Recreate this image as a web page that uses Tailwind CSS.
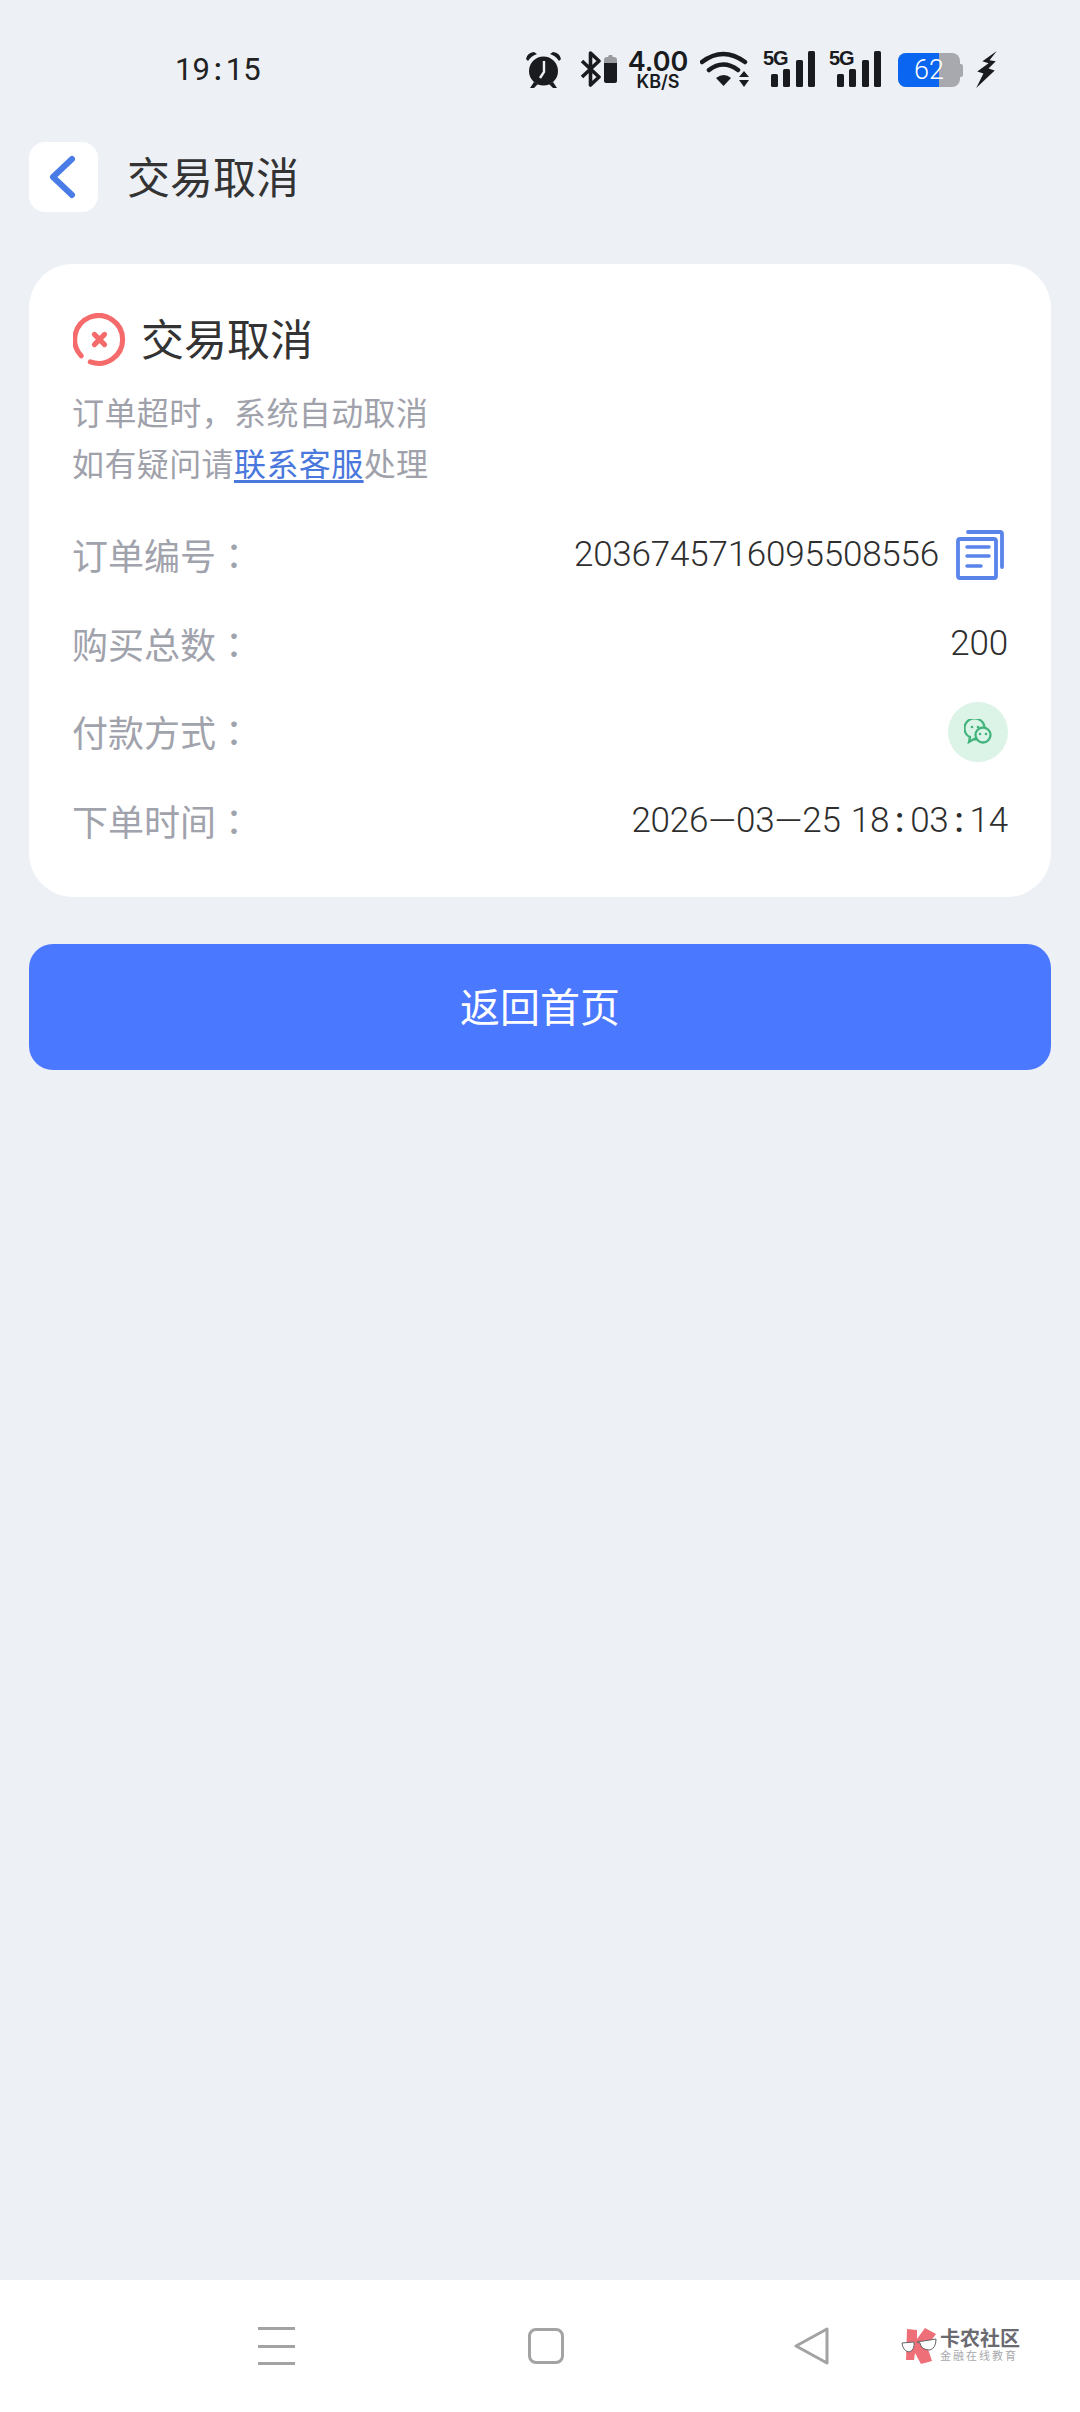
<!DOCTYPE html>
<html lang="zh-CN"><head><meta charset="utf-8">
<script src="https://cdn.jsdelivr.net/npm/@tailwindcss/browser@4"></script>
</head>
<body class="m-0">
<div class="w-[1080px] h-[2412px] bg-[#edf1f6] flex flex-col overflow-hidden font-['Roboto','Noto_Sans_CJK_SC',sans-serif] text-[#333333]">
  <!-- status bar -->
  <div class="h-[142px] shrink-0 flex items-center pl-[175px] pb-[4px]">
    <div class="w-[350px] flex items-center text-[31px] leading-none font-['Roboto'] text-[#222]"><span>19</span><span class="w-[16px] text-center font-medium">:</span><span>15</span></div>
    <svg class="w-[37px] h-[39px]" viewBox="0 0 37 39"><circle cx="18.5" cy="21" r="14.5" fill="#1a1b1f"/><path d="M19 11v11l-4 6" stroke="#edf1f6" stroke-width="2.4" fill="none"/><path d="M1 9q1-6 8-7l3 2q-6 2-9 7zM36 9q-1-6-8-7l-3 2q6 2 9 7z" fill="#1a1b1f"/><path d="M9 32l-4 6h4l4-4zM28 32l4 6h-4l-4-4z" fill="#1a1b1f"/></svg>
    <svg class="w-[21px] h-[36px] ml-[18px]" viewBox="0 0 21 36"><path d="M2 10l17 16-8.500 8V2l8.500 8L2 26" stroke="#1a1b1f" stroke-width="3.600" fill="none" stroke-linejoin="round"/></svg>
    <svg class="w-[13px] h-[36px] ml-[3px]" viewBox="0 0 13 36"><path d="M0 9q0-3 3-3h1l1-2h3l1 2h1q3 0 3 3v5H0z" fill="#9a9b9f"/><path d="M0 12h13v18q0 2-2 2H2q-2 0-2-2z" fill="#1a1b1f"/></svg>
    <div class="w-[60px] ml-[11px] flex flex-col items-center text-[#1a1b1f] font-['Inter'] font-semibold"><span class="text-[27px] leading-[24px]">4.00</span><span class="text-[18px] leading-[15px]">KB/S</span></div>
    <svg class="w-[50px] h-[36px] ml-[12px]" viewBox="0 0 50 36"><path d="M2 11q21-16 43 0M9 19q14-11 29 0" stroke="#1a1b1f" stroke-width="4.500" fill="none" stroke-linecap="round"/><path d="M16 27q8-6 15 0l-7.500 8z" fill="#1a1b1f"/><path d="M44 20l5 6H39zM44 36l5-7H39z" fill="#1a1b1f"/></svg>
    <div class="relative w-[52px] h-[36px] ml-[13px] flex items-end gap-[5.500px] justify-end"><span class="absolute left-[0px] top-[-2px] text-[20px] leading-[19px] tracking-[-1px] font-bold font-['Liberation_Sans'] text-[#1a1b1f]">5G</span><i class="block w-[7px] h-[13px] bg-[#1a1b1f] rounded-[1.500px]"></i><i class="block w-[7px] h-[18px] bg-[#1a1b1f] rounded-[1.500px]"></i><i class="block w-[7px] h-[27px] bg-[#1a1b1f] rounded-[1.500px]"></i><i class="block w-[7px] h-[36px] bg-[#1a1b1f] rounded-[1.500px]"></i></div>
    <div class="relative w-[52px] h-[36px] ml-[14px] flex items-end gap-[5.500px] justify-end"><span class="absolute left-[0px] top-[-2px] text-[20px] leading-[19px] tracking-[-1px] font-bold font-['Liberation_Sans'] text-[#1a1b1f]">5G</span><i class="block w-[7px] h-[13px] bg-[#1a1b1f] rounded-[1.500px]"></i><i class="block w-[7px] h-[18px] bg-[#1a1b1f] rounded-[1.500px]"></i><i class="block w-[7px] h-[27px] bg-[#1a1b1f] rounded-[1.500px]"></i><i class="block w-[7px] h-[36px] bg-[#1a1b1f] rounded-[1.500px]"></i></div>
    <div class="relative w-[62px] h-[34px] ml-[17px] mt-[2px] rounded-[8px] bg-[#a8a9ae] overflow-hidden flex items-center justify-center"><div class="absolute left-0 top-0 bottom-0 w-[41px] bg-[#0a66f0]"></div><span class="relative text-[27px] leading-none text-white font-['Roboto'] font-light">62</span></div>
    <div class="w-[3px] h-[13px] mt-[2px] bg-[#a8a9ae] rounded-r-[2px]"></div>
    <svg class="w-[23px] h-[37px] ml-[12px]" viewBox="0 0 20 36"><path d="M20 0L6 10l6 2L1 20l6 2-7 14 18-17-6-2 7-7-6-1z" fill="#1a1b1f"/></svg>
  </div>
  <!-- header -->
  <div class="flex items-center pl-[29px] h-[70px] shrink-0">
    <div class="w-[69px] h-[70px] bg-white rounded-[16px] flex items-center justify-center"><svg class="w-[36px] h-[48px]" viewBox="0 0 36 48"><path d="M26 6L7 24l19 18" stroke="#4a7ce8" stroke-width="6" fill="none" stroke-linecap="round" stroke-linejoin="round"/></svg></div>
    <span class="ml-[29px] mt-[4px] text-[43px] leading-none">交易取消</span>
  </div>
  <!-- card -->
  <div class="mx-[29px] mt-[52px] h-[633px] bg-white rounded-[44px] px-[43px] pt-[50px] shrink-0">
    <div class="flex items-center h-[52px]">
      <svg class="w-[54px] h-[54px] ml-[1px]" viewBox="0 0 53 53"><path d="M8 42A23.500 23.500 0 1 1 17 48" stroke="#f56b6b" stroke-width="5" fill="none" stroke-linecap="round"/><path d="M21 21l10 10M31 21L21 31" stroke="#f56b6b" stroke-width="5" stroke-linecap="round"/></svg>
      <span class="ml-[14px] mt-[2px] text-[43px] leading-none">交易取消</span>
    </div>
    <div class="mt-[23px] text-[32px] leading-[51px] text-[#9fa1ab] tracking-[0.4px]">
      <p>订单超时，系统自动取消</p>
      <p>如有疑问请<span class="text-[#4a78dc] underline underline-offset-4">联系客服</span>处理</p>
    </div>
    <div class="mt-[20px] flex flex-col text-[#2e2e2e]">
      <div class="h-[88.500px] flex items-center justify-between">
        <span class="text-[36px] text-[#a0a2ac] mt-[2px]">订单编号<span lang="zh-TW" class="font-['Noto_Sans_CJK_TC']">：</span></span>
        <div class="flex items-center"><span class="text-[35px] tracking-[-0.2px] font-light">2036745716095508556</span>
          <svg class="w-[50px] h-[52px] ml-[17px] mr-[2px]" viewBox="0 0 50 52"><rect x="2" y="10" width="38" height="39" rx="2" fill="none" stroke="#5a84ea" stroke-width="3.800"/><path d="M12 3h32q2 0 2 2v33" fill="none" stroke="#5a84ea" stroke-width="3.800" stroke-linecap="round"/><path d="M11 18h22M11 27h22M11 37h14" stroke="#5a84ea" stroke-width="3.500" stroke-linecap="round"/></svg></div>
      </div>
      <div class="h-[88.500px] flex items-center justify-between">
        <span class="text-[36px] text-[#a0a2ac] mt-[2px]">购买总数<span lang="zh-TW" class="font-['Noto_Sans_CJK_TC']">：</span></span><span class="text-[35px] tracking-[-0.2px] font-light">200</span>
      </div>
      <div class="h-[88.500px] flex items-center justify-between">
        <span class="text-[36px] text-[#a0a2ac] mt-[2px]">付款方式<span lang="zh-TW" class="font-['Noto_Sans_CJK_TC']">：</span></span>
        <div class="w-[60px] h-[60px] rounded-full bg-[#dcf3e8] flex items-center justify-center"><svg class="w-[28px] h-[26px]" viewBox="0 0 28 26"><path d="M6 18l-1 5 5-3c1 .2 2 .3 3 .2M5.500 18A10 10 0 1 1 20.500 9" fill="none" stroke="#42b47c" stroke-width="2.300" stroke-linecap="round"/><circle cx="19" cy="16" r="7.500" fill="#dcf3e8" stroke="#42b47c" stroke-width="2.300"/><circle cx="16" cy="15" r="1.300" fill="#42b47c"/><circle cx="22" cy="15" r="1.300" fill="#42b47c"/><circle cx="8" cy="8" r="1.300" fill="#42b47c"/><circle cx="14" cy="8" r="1.300" fill="#42b47c"/></svg></div>
      </div>
      <div class="h-[88.500px] flex items-center justify-between">
        <span class="text-[36px] text-[#a0a2ac] mt-[2px]">下单时间<span lang="zh-TW" class="font-['Noto_Sans_CJK_TC']">：</span></span>
        <div class="flex items-center text-[35px] tracking-[-0.2px] font-light"><span>2026</span><span class="text-[36px] tracking-[0]">—</span><span>03</span><span class="text-[36px] tracking-[0]">—</span><span>25</span><span class="w-[10px]"></span><span>18</span><span class="w-[21px] text-center font-medium">:</span><span>03</span><span class="w-[21px] text-center font-medium">:</span><span>14</span></div>
      </div>
    </div>
  </div>
  <!-- button -->
  <div class="mx-[29px] mt-[47px] h-[126px] shrink-0 rounded-[24px] bg-[#4a78ff] flex items-center justify-center pt-[3px] text-white text-[40px]">返回首页</div>
  <div class="flex-1"></div>
  <!-- nav -->
  <div class="h-[132px] shrink-0 bg-white relative flex items-center">
    <div class="ml-[258px] w-[37px] h-[38px] flex flex-col justify-between"><i class="block h-[3px] bg-[#a3a3a3]"></i><i class="block h-[3px] bg-[#a3a3a3]"></i><i class="block h-[3px] bg-[#a3a3a3]"></i></div>
    <div class="ml-[233px] w-[36px] h-[36px] border-[3px] border-[#a3a3a3] rounded-[8px]"></div>
    <svg class="ml-[230px] w-[36px] h-[38px]" viewBox="0 0 36 38"><path d="M33 2v34L2 19z" fill="none" stroke="#a3a3a3" stroke-width="3" stroke-linejoin="round"/></svg>
    <div class="ml-[71px] flex items-center">
      <svg class="w-[36px] h-[36px]" viewBox="0 0 36 36"><path d="M6 1l10 1v9L24 0l11 6-9 12 5 15-11 3-6-11-1 7H5z" fill="#ef6f78"/><path d="M1 15l12-1q1 8-5 10Q2 23 1 15zM16 14l19-3q0 9-6 11-9 0-10-7z" fill="#fff" stroke="#666" stroke-width="1"/></svg>
      <div class="ml-[3px] flex flex-col items-start">
        <span class="text-[20px] leading-[22px] font-bold text-[#6a6a70]">卡农社区</span>
        <span class="text-[11px] leading-[14px] tracking-[2px] text-[#a8a8ac]">金融在线教育</span>
      </div>
    </div>
  </div>
</div>
</body></html>
